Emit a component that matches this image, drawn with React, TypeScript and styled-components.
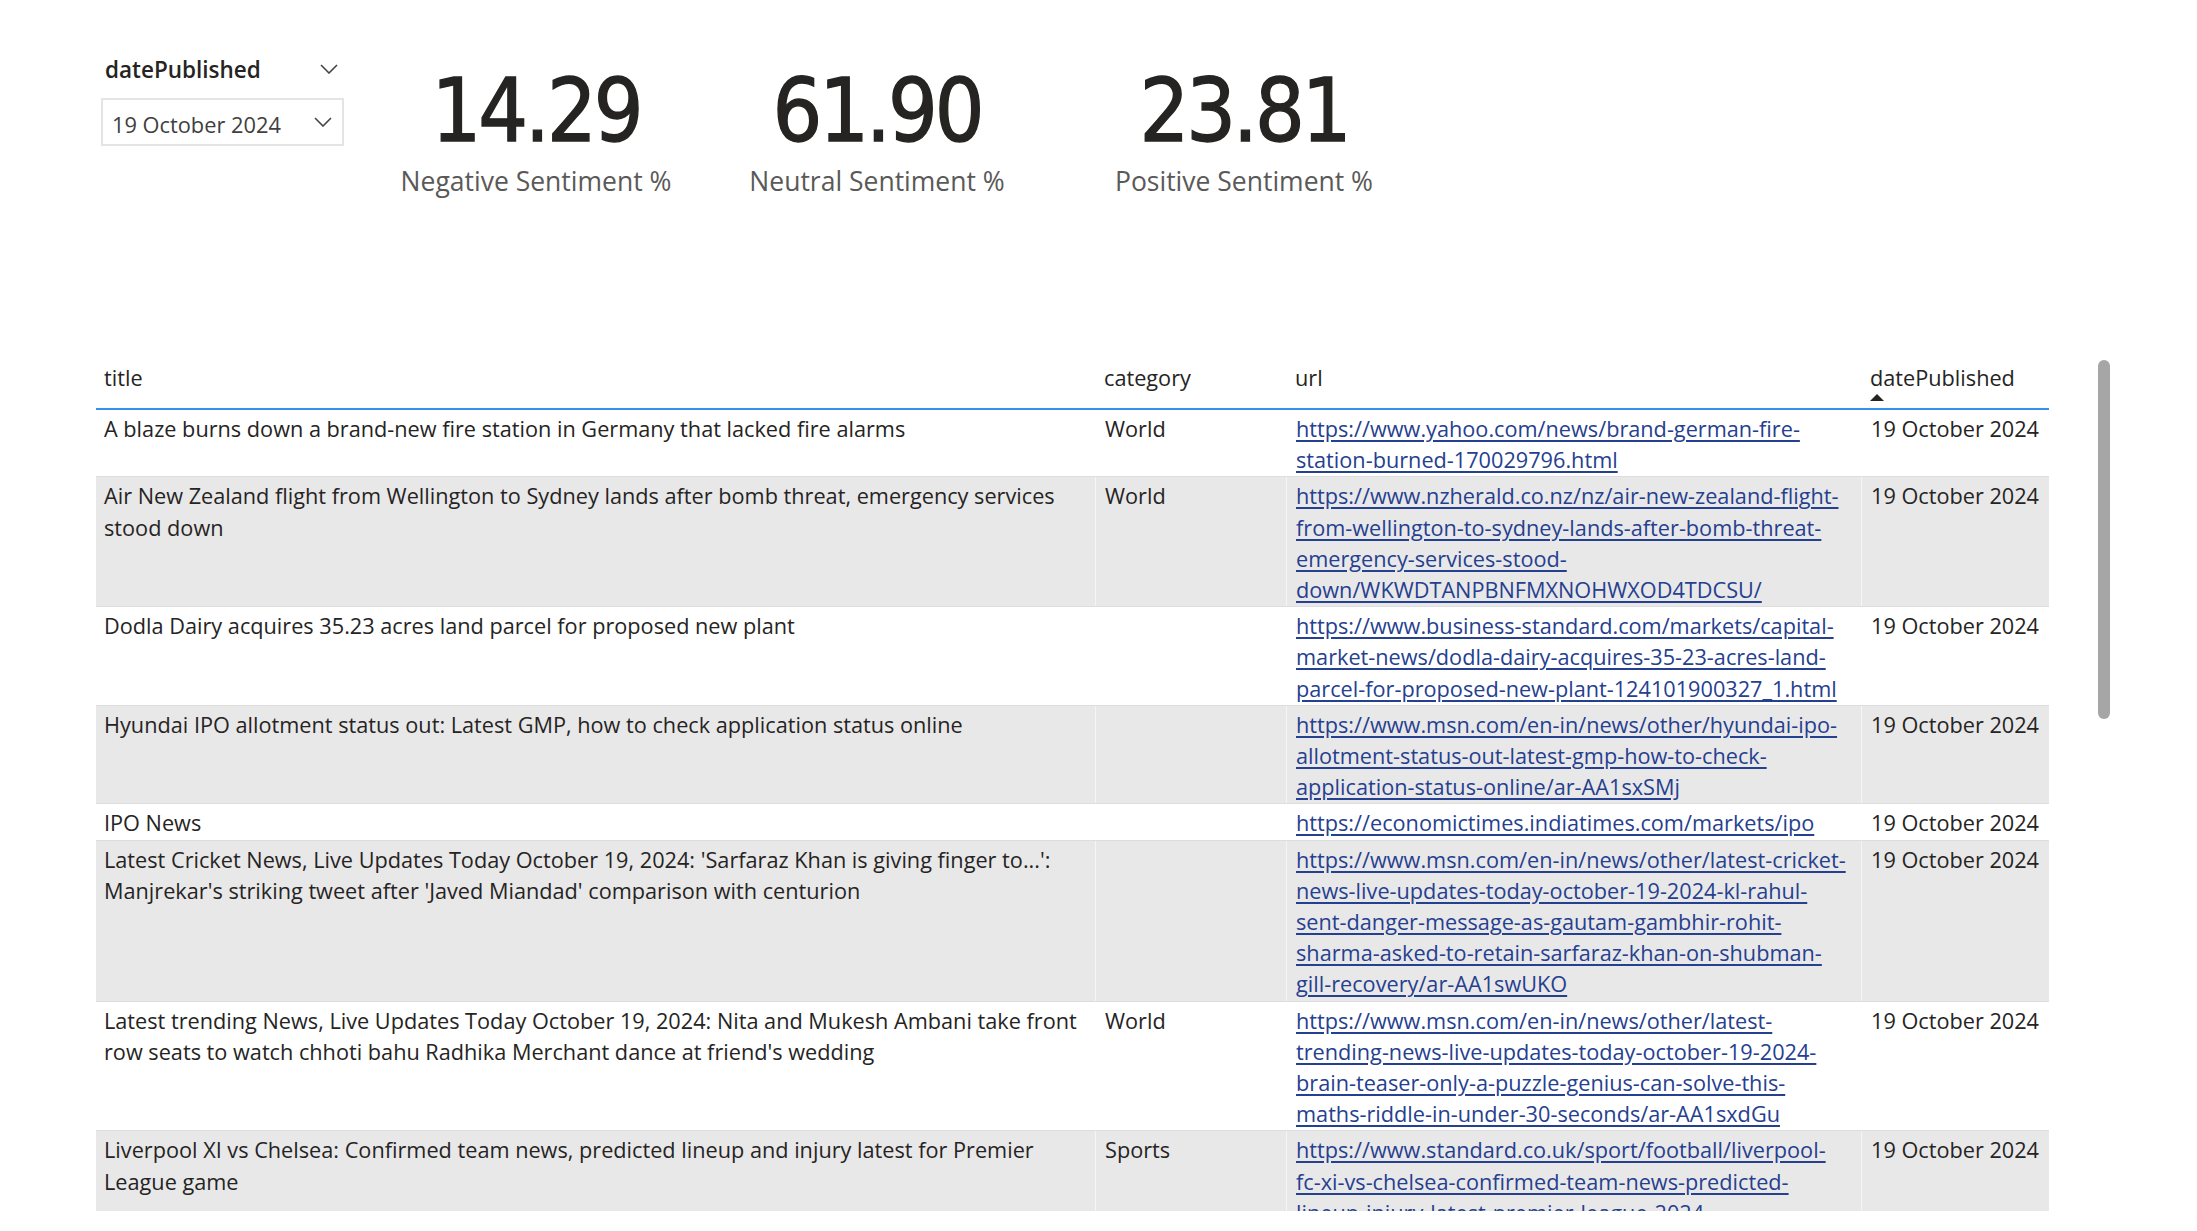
import React from 'react'
import styled, { createGlobalStyle } from 'styled-components'

const GlobalStyle = createGlobalStyle`
  html, body { margin: 0; padding: 0; background: #fff; }
  body { font-family: 'Open Sans', 'Noto Sans', sans-serif; color: #252423; }
`

interface INewsRow { title: string[]; category: string; url: string[]; date: string }

const DATE = '19 October 2024'

const newsRows: INewsRow[] = [
  {
    title: ['A blaze burns down a brand-new fire station in Germany that lacked fire alarms'],
    category: 'World',
    url: ['https://www.yahoo.com/news/brand-german-fire-', 'station-burned-170029796.html'],
    date: DATE
  },
  {
    title: ['Air New Zealand flight from Wellington to Sydney lands after bomb threat, emergency services', 'stood down'],
    category: 'World',
    url: ['https://www.nzherald.co.nz/nz/air-new-zealand-flight-', 'from-wellington-to-sydney-lands-after-bomb-threat-', 'emergency-services-stood-', 'down/WKWDTANPBNFMXNOHWXOD4TDCSU/'],
    date: DATE
  },
  {
    title: ['Dodla Dairy acquires 35.23 acres land parcel for proposed new plant'],
    category: '',
    url: ['https://www.business-standard.com/markets/capital-', 'market-news/dodla-dairy-acquires-35-23-acres-land-', 'parcel-for-proposed-new-plant-124101900327_1.html'],
    date: DATE
  },
  {
    title: ['Hyundai IPO allotment status out: Latest GMP, how to check application status online'],
    category: '',
    url: ['https://www.msn.com/en-in/news/other/hyundai-ipo-', 'allotment-status-out-latest-gmp-how-to-check-', 'application-status-online/ar-AA1sxSMj'],
    date: DATE
  },
  {
    title: ['IPO News'],
    category: '',
    url: ['https://economictimes.indiatimes.com/markets/ipo'],
    date: DATE
  },
  {
    title: ["Latest Cricket News, Live Updates Today October 19, 2024: 'Sarfaraz Khan is giving finger to...':", "Manjrekar's striking tweet after 'Javed Miandad' comparison with centurion"],
    category: '',
    url: ['https://www.msn.com/en-in/news/other/latest-cricket-', 'news-live-updates-today-october-19-2024-kl-rahul-', 'sent-danger-message-as-gautam-gambhir-rohit-', 'sharma-asked-to-retain-sarfaraz-khan-on-shubman-', 'gill-recovery/ar-AA1swUKO'],
    date: DATE
  },
  {
    title: ['Latest trending News, Live Updates Today October 19, 2024: Nita and Mukesh Ambani take front', "row seats to watch chhoti bahu Radhika Merchant dance at friend's wedding"],
    category: 'World',
    url: ['https://www.msn.com/en-in/news/other/latest-', 'trending-news-live-updates-today-october-19-2024-', 'brain-teaser-only-a-puzzle-genius-can-solve-this-', 'maths-riddle-in-under-30-seconds/ar-AA1sxdGu'],
    date: DATE
  },
  {
    title: ['Liverpool XI vs Chelsea: Confirmed team news, predicted lineup and injury latest for Premier', 'League game'],
    category: 'Sports',
    url: ['https://www.standard.co.uk/sport/football/liverpool-', 'fc-xi-vs-chelsea-confirmed-team-news-predicted-', 'lineup-injury-latest-premier-league-2024'],
    date: DATE
  }
]

const kpis = [
  { value: '14.29', label: 'Negative Sentiment %', width: 300 },
  { value: '61.90', label: 'Neutral Sentiment %', width: 382 },
  { value: '23.81', label: 'Positive Sentiment %', width: 352 }
]

const COLUMNS = '999px 191px 575px 188px'

const Chevron = () => (
  <svg width="18" height="10" viewBox="0 0 18 10">
    <polyline points="1,1 9,9 17,1" fill="none" stroke="#444" strokeWidth="1.6" />
  </svg>
)

const SortUp = () => (
  <svg width="14" height="7" viewBox="0 0 14 7">
    <polygon points="0,7 7,0 14,7" fill="#252423" />
  </svg>
)

export default function App() {
  return (
    <Page>
      <GlobalStyle />
      <Top>
        <Slicer>
          <SlicerHeader>
            <span>datePublished</span>
            <Chevron />
          </SlicerHeader>
          <DropBox>
            <DropText>{DATE}</DropText>
            <Chevron />
          </DropBox>
        </Slicer>
        <KpiRow>
          {kpis.map(k => (
            <Card key={k.label} w={k.width}>
              <KpiValue>{k.value}</KpiValue>
              <KpiLabel>{k.label}</KpiLabel>
            </Card>
          ))}
        </KpiRow>
      </Top>
      <TableArea>
        <Table>
          <HeadRow>
            <HeadCell first>title</HeadCell>
            <HeadCell>category</HeadCell>
            <HeadCell>url</HeadCell>
            <HeadCell>
              <div>datePublished</div>
              <SortUp />
            </HeadCell>
          </HeadRow>
          {newsRows.map((r, i) => (
            <Row key={i} shade={i % 2 === 1}>
              <Cell first>
                {r.title.map((l, j) => <Line key={j}>{l}</Line>)}
              </Cell>
              <Cell>{r.category}</Cell>
              <Cell>
                <Link href="#">
                  {r.url.map((l, j) => <Line key={j}>{l}</Line>)}
                </Link>
              </Cell>
              <Cell>{r.date}</Cell>
            </Row>
          ))}
        </Table>
        <ScrollThumb />
      </TableArea>
    </Page>
  )
}

const Page = styled.div`
  width: 2197px;
  height: 1231px;
  overflow: hidden;
  box-sizing: border-box;
  padding-top: 54px;
`
const Top = styled.div`
  display: flex;
  align-items: flex-start;
  padding-left: 101px;
`
const Slicer = styled.div`
  width: 243px;
  display: flex;
  flex-direction: column;
  gap: 14px;
`
const SlicerHeader = styled.div`
  display: flex;
  justify-content: space-between;
  align-items: center;
  height: 30px;
  padding: 0 6px 0 4px;
  font-size: 22.5px;
  font-weight: 600;
  color: #252423;
`
const DropBox = styled.div`
  height: 48px;
  box-sizing: border-box;
  border: 2px solid #e4e4e4;
  display: flex;
  align-items: center;
  justify-content: space-between;
  padding: 0 10px 0 9px;
  font-size: 21.8px;
  color: #404040;
`
const DropText = styled.span`
  padding-top: 4px;
`
const KpiRow = styled.div`
  display: flex;
  margin-left: 42px;
  margin-top: 12px;
`
const Card = styled.div<{ w: number }>`
  width: ${p => p.w}px;
  display: flex;
  flex-direction: column;
  align-items: center;
`
const KpiValue = styled.div`
  font-family: 'DejaVu Sans Condensed', 'DejaVu Sans', sans-serif;
  font-stretch: condensed;
  font-weight: 400;
  font-size: 87px;
  line-height: 90px;
  letter-spacing: -3px;
  color: #252423;
  -webkit-text-stroke: 1.3px #252423;
`
const KpiLabel = styled.div`
  margin-top: 8px;
  font-size: 26.5px;
  line-height: 34px;
  color: #5a5958;
`
const TableArea = styled.div`
  display: flex;
  align-items: flex-start;
  margin-top: 161px;
  padding-left: 96px;
`
const Table = styled.div`
  width: 1953px;
  height: 852px;
  overflow: hidden;
  font-size: 21.7px;
`
const HeadRow = styled.div`
  display: grid;
  grid-template-columns: ${COLUMNS};
  border-bottom: 2px solid #3590ee;
`
const HeadCell = styled.div<{ first?: boolean }>`
  height: 46px;
  padding: 3px 9px 0 ${p => (p.first ? 8 : 9)}px;
  line-height: 31px;
  color: #252423;
  svg { display: block; margin-top: 1px; }
`
const Row = styled.div<{ shade: boolean }>`
  display: grid;
  grid-template-columns: ${COLUMNS};
  background: ${p => (p.shade ? '#e9e8e9' : '#fff')};
  border-bottom: 1px solid #dedddd;
`
const Cell = styled.div<{ first?: boolean }>`
  padding: 3px 9px 1px ${p => (p.first ? 8 : 9)}px;
  line-height: 31.2px;
  white-space: nowrap;
  border-left: ${p => (p.first ? 'none' : '1px solid rgba(255,255,255,0.55)')};
`
const Line = styled.div``
const Link = styled.a`
  display: block;
  color: #25408f;
  text-decoration: underline;
  text-underline-offset: 3px;
`
const ScrollThumb = styled.div`
  width: 12px;
  height: 359px;
  margin-left: 49px;
  margin-top: 1px;
  border-radius: 6px;
  background: #a6a6a6;
`
